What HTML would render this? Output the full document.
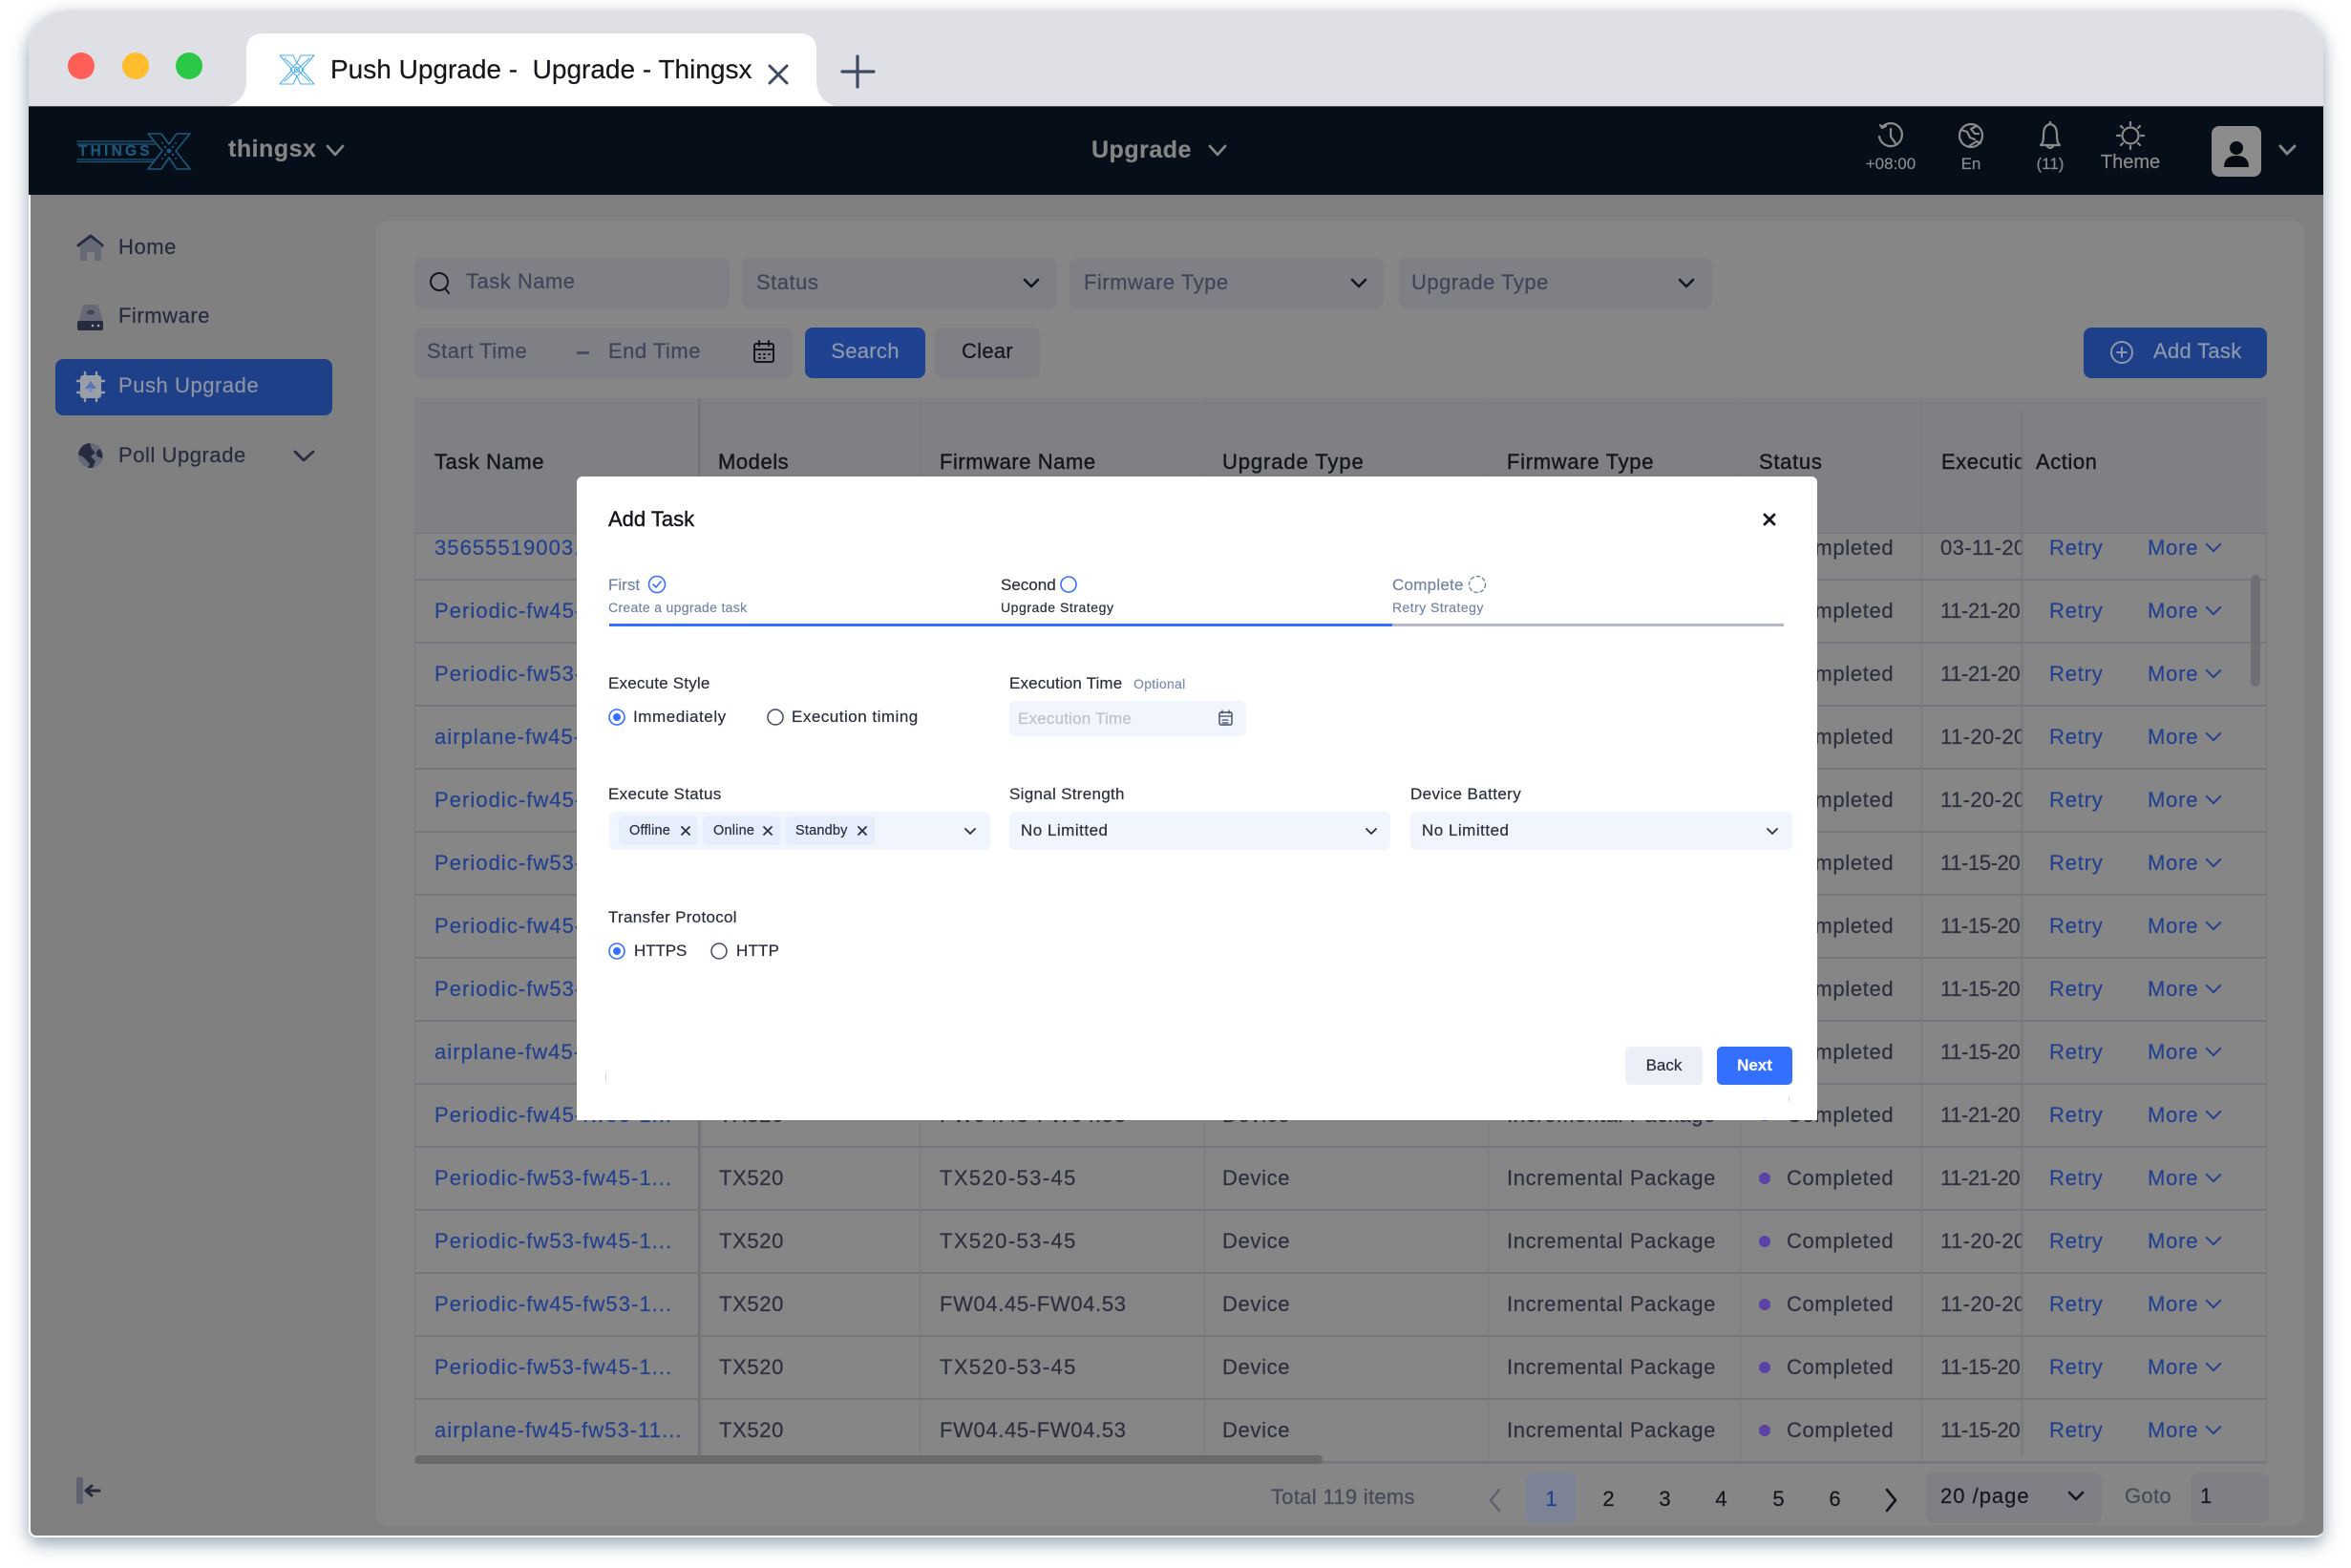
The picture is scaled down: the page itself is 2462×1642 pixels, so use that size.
<!DOCTYPE html>
<html><head><meta charset="utf-8"><title>Push Upgrade</title>
<style>
*{box-sizing:border-box}
html,body{margin:0;padding:0;width:2462px;height:1642px;background:#fff;overflow:hidden;font-family:"Liberation Sans",sans-serif;-webkit-text-stroke:.2px}
.a,.t{position:absolute}
.t{white-space:nowrap;line-height:40px;height:40px}
.box{position:absolute;background:#7e8086;border-radius:8px}
.side{font-size:22px;letter-spacing:.55px;color:#262b40}
.ph{font-size:22px;letter-spacing:.5px;color:#3f4558}
.hd{font-size:22px;color:#14161e;letter-spacing:.55px;-webkit-text-stroke:.4px #14161e}
.vl{position:absolute;top:417px;height:1116px;width:1px;background:#787a82}
.r{position:absolute;left:434px;width:1940px;height:66px;border-bottom:2px solid #74767d;font-size:22px;letter-spacing:.65px;color:#2b2f3e}
.r span{position:absolute;top:0;line-height:63px;white-space:nowrap}
.r .a1{left:21px;color:#23408f;letter-spacing:1.05px}
.r .b{left:319px}.r .c{left:550px}.r .x{letter-spacing:1.4px}.r .d{left:846px}.r .e{left:1144px}
.r .f{left:1408px;top:26px;width:12px;height:12px;border-radius:50%;background:#5a42a6}
.r .g{left:1437px}
.r .h{left:1598px;width:86px;overflow:hidden;letter-spacing:-.4px}
.r .h2{left:1598px;width:86px;overflow:hidden;letter-spacing:.4px}
.r .i{left:1712px;color:#23408f;letter-spacing:.8px}
.r .j{left:1815px;color:#23408f;letter-spacing:.8px}
.r .k{left:1878px;top:22px;width:12px;height:12px;border-right:2px solid #23408f;border-bottom:2px solid #23408f;transform:rotate(45deg)}
.m{font-size:17px;color:#2b2f3e;letter-spacing:.2px}
.mb{position:absolute;background:#f1f5fe;border-radius:6px}
.tag{position:absolute;top:855px;height:30px;background:#e7eefb;border-radius:4px}
.pg{font-size:22px;color:#14161e}
</style></head>
<body>
<div class="a" style="left:30px;top:11px;width:2403px;height:1599px;border-radius:40px 40px 10px 10px;box-shadow:0 6px 18px rgba(70,100,130,.6)"></div>

<!-- title bar -->
<div class="a" style="left:30px;top:11px;width:2403px;height:101px;background:#dee0e5;border-radius:40px 40px 0 0"></div>
<svg class="a" style="left:230px;top:30px" width="660" height="82" viewBox="230 30 660 82"><path d="M238 111 C252 108 258 96 258 84 V53 Q258 35 276 35 H837 Q855 35 855 53 V84 C855 96 861 108 875 111 Z" fill="#fff"/></svg>
<div class="a" style="left:71px;top:55px;width:28px;height:28px;border-radius:50%;background:#ff5f57"></div>
<div class="a" style="left:128px;top:55px;width:28px;height:28px;border-radius:50%;background:#ffbd2e"></div>
<div class="a" style="left:184px;top:55px;width:28px;height:28px;border-radius:50%;background:#2ac845"></div>
<div class="t" style="left:346px;top:53px;font-size:28px;color:#15171c;letter-spacing:0;white-space:pre">Push Upgrade -  Upgrade - Thingsx</div>

<!-- header -->
<div class="a" style="left:30px;top:111px;width:2403px;height:93px;background:#060e1a;border-top:1px solid #4a4e55"></div>
<div class="t" style="left:82px;top:139px;font-size:15.5px;font-weight:700;letter-spacing:3.2px;color:#1c5a7c">THINGS</div>
<div class="t" style="left:239px;top:136px;font-size:25px;font-weight:700;color:#858585;letter-spacing:.5px">thingsx</div>
<div class="t" style="left:1143px;top:137px;font-size:25px;font-weight:700;color:#858585;letter-spacing:.5px">Upgrade</div>
<div class="t" style="left:1940px;top:152px;width:80px;text-align:center;font-size:17px;color:#858a8e">+08:00</div>
<div class="t" style="left:2024px;top:152px;width:80px;text-align:center;font-size:17px;color:#858a8e">En</div>
<div class="t" style="left:2107px;top:152px;width:80px;text-align:center;font-size:17px;color:#858a8e">(11)</div>
<div class="t" style="left:2181px;top:150px;width:100px;text-align:center;font-size:20px;color:#8b8b8b">Theme</div>
<div class="a" style="left:2316px;top:132px;width:52px;height:53px;border-radius:8px;background:#8c8c8c"></div>

<!-- content -->
<div class="a" style="left:30px;top:204px;width:2403px;height:1406px;background:#808080;border-left:2px solid #fff;border-bottom:2px solid #fff;border-radius:0 0 8px 8px"></div>
<div class="a" style="left:394px;top:231px;width:2019px;height:1367px;background:#868686;border-radius:12px"></div>

<!-- sidebar -->
<div class="t side" style="left:124px;top:239px">Home</div>
<div class="t side" style="left:124px;top:311px">Firmware</div>
<div class="a" style="left:58px;top:376px;width:290px;height:59px;background:#1e4088;border-radius:8px"></div>
<div class="t side" style="left:124px;top:384px;color:#8d93a2">Push Upgrade</div>
<div class="t side" style="left:124px;top:457px">Poll Upgrade</div>

<!-- filters -->
<div class="box" style="left:434px;top:270px;width:330px;height:53px"></div>
<div class="box" style="left:777px;top:270px;width:330px;height:53px"></div>
<div class="box" style="left:1120px;top:270px;width:329px;height:53px"></div>
<div class="box" style="left:1465px;top:270px;width:328px;height:53px"></div>
<div class="box" style="left:434px;top:343px;width:396px;height:53px"></div>
<div class="a" style="left:843px;top:343px;width:126px;height:53px;background:#1f4390;border-radius:8px"></div>
<div class="box" style="left:979px;top:343px;width:110px;height:53px"></div>
<div class="a" style="left:2182px;top:343px;width:192px;height:53px;background:#1e4088;border-radius:8px"></div>
<div class="t ph" style="left:488px;top:275px">Task Name</div>
<div class="t ph" style="left:792px;top:276px">Status</div>
<div class="t ph" style="left:1135px;top:276px">Firmware Type</div>
<div class="t ph" style="left:1478px;top:276px">Upgrade Type</div>
<div class="t ph" style="left:447px;top:348px">Start Time</div>
<div class="t ph" style="left:637px;top:348px">End Time</div>
<div class="a" style="left:604px;top:368px;width:13px;height:3px;background:#484e60"></div>
<div class="t" style="left:843px;top:348px;width:126px;text-align:center;font-size:22px;color:#8d97ad;letter-spacing:.3px">Search</div>
<div class="t" style="left:979px;top:348px;width:110px;text-align:center;font-size:22px;color:#14161e;letter-spacing:.3px">Clear</div>
<div class="t" style="left:2255px;top:348px;font-size:22px;color:#8d97ad;letter-spacing:.3px">Add Task</div>

<!-- table -->
<div class="a" style="left:434px;top:417px;width:1940px;height:1116px;background:#868686;border:1px solid #787a82;border-radius:8px 8px 0 0"></div>
<div class="a" style="left:434px;top:417px;width:1940px;height:1116px;overflow:hidden">
<div class="a" style="left:0;top:0;width:1940px;height:1116px">
<div class="r" style="top:125px;left:0"><span class="a1">35655519003...</span><span class="b">TX520</span><span class="c">FW04.45-FW04.53</span><span class="d">Device</span><span class="e">Incremental Package</span><i class="f a"></i><span class="g">Completed</span><span class="h2">03-11-2022</span><span class="i">Retry</span><span class="j">More</span><b class="k a"></b></div>
<div class="r" style="top:191px;left:0"><span class="a1">Periodic-fw45-fw53-1...</span><span class="b">TX520</span><span class="c">FW04.45-FW04.53</span><span class="d">Device</span><span class="e">Incremental Package</span><i class="f a"></i><span class="g">Completed</span><span class="h">11-21-20</span><span class="i">Retry</span><span class="j">More</span><b class="k a"></b></div>
<div class="r" style="top:257px;left:0"><span class="a1">Periodic-fw53-fw45-1...</span><span class="b">TX520</span><span class="c x">TX520-53-45</span><span class="d">Device</span><span class="e">Incremental Package</span><i class="f a"></i><span class="g">Completed</span><span class="h">11-21-20</span><span class="i">Retry</span><span class="j">More</span><b class="k a"></b></div>
<div class="r" style="top:323px;left:0"><span class="a1">airplane-fw45-fw53-11...</span><span class="b">TX520</span><span class="c">FW04.45-FW04.53</span><span class="d">Device</span><span class="e">Incremental Package</span><i class="f a"></i><span class="g">Completed</span><span class="h2">11-20-2022</span><span class="i">Retry</span><span class="j">More</span><b class="k a"></b></div>
<div class="r" style="top:389px;left:0"><span class="a1">Periodic-fw45-fw53-1...</span><span class="b">TX520</span><span class="c">FW04.45-FW04.53</span><span class="d">Device</span><span class="e">Incremental Package</span><i class="f a"></i><span class="g">Completed</span><span class="h2">11-20-2022</span><span class="i">Retry</span><span class="j">More</span><b class="k a"></b></div>
<div class="r" style="top:455px;left:0"><span class="a1">Periodic-fw53-fw45-1...</span><span class="b">TX520</span><span class="c x">TX520-53-45</span><span class="d">Device</span><span class="e">Incremental Package</span><i class="f a"></i><span class="g">Completed</span><span class="h">11-15-20</span><span class="i">Retry</span><span class="j">More</span><b class="k a"></b></div>
<div class="r" style="top:521px;left:0"><span class="a1">Periodic-fw45-fw53-1...</span><span class="b">TX520</span><span class="c">FW04.45-FW04.53</span><span class="d">Device</span><span class="e">Incremental Package</span><i class="f a"></i><span class="g">Completed</span><span class="h">11-15-20</span><span class="i">Retry</span><span class="j">More</span><b class="k a"></b></div>
<div class="r" style="top:587px;left:0"><span class="a1">Periodic-fw53-fw45-1...</span><span class="b">TX520</span><span class="c x">TX520-53-45</span><span class="d">Device</span><span class="e">Incremental Package</span><i class="f a"></i><span class="g">Completed</span><span class="h">11-15-20</span><span class="i">Retry</span><span class="j">More</span><b class="k a"></b></div>
<div class="r" style="top:653px;left:0"><span class="a1">airplane-fw45-fw53-11...</span><span class="b">TX520</span><span class="c">FW04.45-FW04.53</span><span class="d">Device</span><span class="e">Incremental Package</span><i class="f a"></i><span class="g">Completed</span><span class="h">11-15-20</span><span class="i">Retry</span><span class="j">More</span><b class="k a"></b></div>
<div class="r" style="top:719px;left:0"><span class="a1">Periodic-fw45-fw53-1...</span><span class="b">TX520</span><span class="c">FW04.45-FW04.53</span><span class="d">Device</span><span class="e">Incremental Package</span><i class="f a"></i><span class="g">Completed</span><span class="h">11-21-20</span><span class="i">Retry</span><span class="j">More</span><b class="k a"></b></div>
<div class="r" style="top:785px;left:0"><span class="a1">Periodic-fw53-fw45-1...</span><span class="b">TX520</span><span class="c x">TX520-53-45</span><span class="d">Device</span><span class="e">Incremental Package</span><i class="f a"></i><span class="g">Completed</span><span class="h">11-21-20</span><span class="i">Retry</span><span class="j">More</span><b class="k a"></b></div>
<div class="r" style="top:851px;left:0"><span class="a1">Periodic-fw53-fw45-1...</span><span class="b">TX520</span><span class="c x">TX520-53-45</span><span class="d">Device</span><span class="e">Incremental Package</span><i class="f a"></i><span class="g">Completed</span><span class="h2">11-20-2022</span><span class="i">Retry</span><span class="j">More</span><b class="k a"></b></div>
<div class="r" style="top:917px;left:0"><span class="a1">Periodic-fw45-fw53-1...</span><span class="b">TX520</span><span class="c">FW04.45-FW04.53</span><span class="d">Device</span><span class="e">Incremental Package</span><i class="f a"></i><span class="g">Completed</span><span class="h2">11-20-2022</span><span class="i">Retry</span><span class="j">More</span><b class="k a"></b></div>
<div class="r" style="top:983px;left:0"><span class="a1">Periodic-fw53-fw45-1...</span><span class="b">TX520</span><span class="c x">TX520-53-45</span><span class="d">Device</span><span class="e">Incremental Package</span><i class="f a"></i><span class="g">Completed</span><span class="h">11-15-20</span><span class="i">Retry</span><span class="j">More</span><b class="k a"></b></div>
<div class="r" style="top:1049px;left:0"><span class="a1">airplane-fw45-fw53-11...</span><span class="b">TX520</span><span class="c">FW04.45-FW04.53</span><span class="d">Device</span><span class="e">Incremental Package</span><i class="f a"></i><span class="g">Completed</span><span class="h">11-15-20</span><span class="i">Retry</span><span class="j">More</span><b class="k a"></b></div>
</div>
<!-- header row -->
<div class="a" style="left:0;top:0;width:1940px;height:142px;background:#7f8084;border-bottom:1px solid #72747b"></div>
</div>
<div class="t hd" style="left:455px;top:464px">Task Name</div>
<div class="t hd" style="left:752px;top:464px">Models</div>
<div class="t hd" style="left:984px;top:464px">Firmware Name</div>
<div class="t hd" style="left:1280px;top:464px;letter-spacing:.9px">Upgrade Type</div>
<div class="t hd" style="left:1578px;top:464px;letter-spacing:.7px">Firmware Type</div>
<div class="t hd" style="left:1842px;top:464px;letter-spacing:.7px">Status</div>
<div class="t hd" style="left:2033px;top:464px;width:85px;overflow:hidden">Execution Time</div>
<div class="t hd" style="left:2132px;top:464px">Action</div>
<div class="vl" style="left:963px"></div>
<div class="vl" style="left:1261px"></div>
<div class="vl" style="left:1558px"></div>
<div class="vl" style="left:1822px"></div>
<div class="vl" style="left:2012px"></div>
<div class="a" style="left:731px;top:417px;width:5px;height:1116px;background:linear-gradient(90deg,#6d6e72,#7c7d80 60%,rgba(130,130,130,0))"></div>
<div class="a" style="left:2114px;top:430px;width:5px;height:1095px;background:linear-gradient(90deg,rgba(120,120,125,0),#77787c)"></div>
<div class="a" style="left:2357px;top:602px;width:10px;height:117px;border-radius:5px;background:#6f7075"></div>
<div class="a" style="left:435px;top:1524px;width:950px;height:9px;border-radius:4px;background:#696a6c"></div>

<!-- pagination -->
<div class="t" style="left:1331px;top:1548px;font-size:22px;letter-spacing:.3px;color:#454a59">Total 119 items</div>
<div class="a" style="left:1598px;top:1542px;width:53px;height:53px;border-radius:8px;background:#7b8394"></div>
<div class="t pg" style="left:1598px;top:1550px;width:53px;text-align:center;color:#23408f">1</div>
<div class="t pg" style="left:1658px;top:1550px;width:53px;text-align:center">2</div>
<div class="t pg" style="left:1717px;top:1550px;width:53px;text-align:center">3</div>
<div class="t pg" style="left:1776px;top:1550px;width:53px;text-align:center">4</div>
<div class="t pg" style="left:1836px;top:1550px;width:53px;text-align:center">5</div>
<div class="t pg" style="left:1895px;top:1550px;width:53px;text-align:center">6</div>
<div class="box" style="left:2017px;top:1542px;width:184px;height:53px"></div>
<div class="t pg" style="left:2032px;top:1547px;letter-spacing:1px">20 /page</div>
<div class="t" style="left:2225px;top:1547px;font-size:22px;letter-spacing:.3px;color:#454a59">Goto</div>
<div class="box" style="left:2294px;top:1542px;width:82px;height:53px"></div>
<div class="t pg" style="left:2304px;top:1547px">1</div>

<!-- modal -->
<div class="a" style="left:604px;top:499px;width:1299px;height:674px;background:#fff;border-radius:6px 6px 0 0"></div>
<div class="t" style="left:637px;top:524px;font-size:22px;color:#14161e;-webkit-text-stroke:.4px #14161e">Add Task</div>
<div class="t" style="left:637px;top:593px;font-size:17px;color:#7585a8">First</div>
<div class="t" style="left:637px;top:616px;font-size:14px;letter-spacing:.33px;color:#7585a8">Create a upgrade task</div>
<div class="t" style="left:1048px;top:593px;font-size:17px;color:#2b2f3e">Second</div>
<div class="t" style="left:1048px;top:616px;font-size:14px;letter-spacing:.55px;color:#2b2f3e">Upgrade Strategy</div>
<div class="t" style="left:1458px;top:593px;font-size:17px;letter-spacing:.25px;color:#7585a8">Complete</div>
<div class="t" style="left:1458px;top:616px;font-size:14px;letter-spacing:.45px;color:#7585a8">Retry Strategy</div>
<div class="a" style="left:638px;top:653px;width:820px;height:3px;background:#3370ff"></div>
<div class="a" style="left:1458px;top:653px;width:410px;height:3px;background:#b5b9c8"></div>

<div class="t m" style="left:637px;top:696px;letter-spacing:.2px">Execute Style</div>
<div class="t m" style="left:1057px;top:696px;letter-spacing:.15px">Execution Time</div>
<div class="t" style="left:1187px;top:696px;font-size:14px;letter-spacing:.3px;color:#7a8cb0">Optional</div>
<div class="t m" style="left:663px;top:731px;letter-spacing:.55px">Immediately</div>
<div class="t m" style="left:829px;top:731px;letter-spacing:.5px">Execution timing</div>
<div class="mb" style="left:1057px;top:734px;width:248px;height:37px"></div>
<div class="t" style="left:1066px;top:733px;font-size:17px;letter-spacing:.2px;color:#bcc2cf">Execution Time</div>

<div class="t m" style="left:637px;top:812px;letter-spacing:.3px">Execute Status</div>
<div class="t m" style="left:1057px;top:812px;letter-spacing:.3px">Signal Strength</div>
<div class="t m" style="left:1477px;top:812px;letter-spacing:.4px">Device Battery</div>
<div class="mb" style="left:638px;top:850px;width:399px;height:40px"></div>
<div class="mb" style="left:1057px;top:850px;width:399px;height:40px"></div>
<div class="mb" style="left:1477px;top:850px;width:400px;height:40px"></div>
<div class="tag" style="left:648px;width:82px"></div>
<div class="tag" style="left:736px;width:81px"></div>
<div class="tag" style="left:823px;width:93px"></div>
<div class="t" style="left:659px;top:850px;font-size:14.5px;letter-spacing:.2px;color:#2b2f3e">Offline</div>
<div class="t" style="left:747px;top:850px;font-size:14.5px;letter-spacing:.2px;color:#2b2f3e">Online</div>
<div class="t" style="left:833px;top:850px;font-size:14.5px;letter-spacing:.2px;color:#2b2f3e">Standby</div>
<div class="t" style="left:1069px;top:850px;font-size:17px;letter-spacing:.5px;color:#2b2f3e">No Limitted</div>
<div class="t" style="left:1489px;top:850px;font-size:17px;letter-spacing:.5px;color:#2b2f3e">No Limitted</div>

<div class="t m" style="left:637px;top:941px;letter-spacing:.3px">Transfer Protocol</div>
<div class="t m" style="left:664px;top:976px;letter-spacing:-.1px">HTTPS</div>
<div class="t m" style="left:771px;top:976px">HTTP</div>
<div class="a" style="left:1702px;top:1096px;width:81px;height:40px;background:#eceff8;border-radius:5px"></div>
<div class="a" style="left:1798px;top:1096px;width:79px;height:40px;background:#3370ff;border-radius:5px"></div>
<div class="t" style="left:1702px;top:1096px;width:81px;text-align:center;font-size:17px;color:#2b2f3e">Back</div>
<div class="t" style="left:1798px;top:1096px;width:79px;text-align:center;font-size:17px;font-weight:700;color:#fff">Next</div>
<div class="a" style="left:634px;top:1122px;width:1px;height:12px;background:#d8dade"></div>
<div class="a" style="left:1873px;top:1148px;width:1px;height:6px;background:#d8dade"></div>

<!-- icon overlay -->
<svg class="a" style="left:0;top:0;pointer-events:none" width="2462" height="1642" viewBox="0 0 2462 1642" fill="none" stroke-linecap="round" stroke-linejoin="round">
<!-- favicon -->
<g stroke="#4fb0ea" stroke-width="1.1">
<path d="M293 58 H307 L311 66 L315 58 H329 L316 73 L329 88 H315 L311 80 L307 88 H293 L306 73 Z"/>
<path d="M298 61 L324 85 M324 61 L298 85 M311 66 L304 73 L311 80 L318 73 Z"/>
<circle cx="311" cy="73" r="2.5"/>
</g>
<!-- tab close, plus -->
<path d="M806 69 L824 87 M824 69 L806 87" stroke="#3e4a63" stroke-width="3"/>
<path d="M898 59 V91 M882 75 H915" stroke="#3e4a63" stroke-width="3.2"/>
<!-- logo -->
<g stroke="#1c5a7c">
<path d="M155 140 H169 L177 151 L185 140 H199 L184 158 L199 177 H185 L177 165 L169 177 H155 L170 158 Z" stroke-width="1.6"/>
<path d="M81 148 H160 M81 151 H163 M81 167 H163 M81 169.500 H160" stroke-width="1.3"/>
</g>
<g fill="#1c5a7c"><circle cx="177" cy="158" r="2.5"/><circle cx="170" cy="150" r="1"/><circle cx="184" cy="150" r="1"/><circle cx="170" cy="166" r="1"/><circle cx="184" cy="166" r="1"/><circle cx="173" cy="154" r="1.2"/><circle cx="181" cy="154" r="1.2"/><circle cx="173" cy="162" r="1.2"/><circle cx="181" cy="162" r="1.2"/><circle cx="177" cy="150" r="1"/><circle cx="177" cy="166" r="1"/></g>
<!-- header chevrons -->
<g stroke-width="2.8" stroke="#858585">
<path d="M343 153 L351 162 L359 153"/><path d="M1267 153 L1275 162 L1283 153"/>
<path d="M2388 153 L2395 161 L2403 153" stroke-width="3"/>
</g>
<!-- right icons -->
<g stroke="#8b8b8b" stroke-width="2.2">
<path d="M1971 133 A12 12 0 1 1 1968 143 M1969 131 L1971 134 L1975 132"/><path d="M1980 135 V143 L1985 150"/>
<circle cx="2064" cy="142" r="12"/><path d="M2054 136 L2060 138 L2063 144 L2068 146 M2070 132 L2064 135 L2068 140 L2072 140 M2062 153 L2070 148 L2074 150"/>
<path d="M2147 130 C2141 131 2140 136 2140 142 C2140 148 2139 150 2137 152 H2157 C2155 150 2154 148 2154 142 C2154 136 2153 131 2147 130 Z M2147 130 V128 M2143 152 Q2147 158 2151 152"/>
<circle cx="2231" cy="142" r="8.5"/><path d="M2231 128 V131 M2231 153 V156 M2217 142 H2220 M2242 142 H2245 M2221 132 L2223 134 M2239 150 L2241 152 M2241 132 L2239 134 M2223 150 L2221 152"/>
</g>
<!-- avatar -->
<circle cx="2342" cy="155" r="7" fill="#050a12"/><path d="M2329 175 Q2329 163 2342 163 Q2355 163 2355 175 Z" fill="#050a12"/>
<!-- sidebar icons -->
<path d="M82 257 L95 247 L107 257" stroke="#262b40" stroke-width="3"/>
<path d="M84 257 L95 249 L106 257 V273 H99 V264 H91 V273 H84 Z" fill="#666a76"/>
<path d="M87 320 Q88 319 90 319 H100 Q102 319 103 320 L108 337 H82 Z" fill="#666a76"/>
<ellipse cx="95" cy="327" rx="4" ry="2.5" fill="#3f4352"/>
<rect x="81" y="336" width="27" height="10" rx="2" fill="#262b40"/>
<circle cx="97" cy="341" r="1.3" fill="#aaa"/><circle cx="103" cy="341" r="1.3" fill="#aaa"/>
<rect x="84" y="393" width="22" height="24" rx="3" fill="#9a9ea8"/>
<path d="M89 390 V393 M101 390 V393 M89 417 V420 M101 417 V420 M81 399 H84 M81 411 H84 M106 399 H109 M106 411 H109" stroke="#9a9ea8" stroke-width="2.4"/>
<path d="M95 399 L101 407 H89 Z" fill="#5a73b5"/><rect x="93.500" y="406" width="3" height="5" fill="#7488bd"/>
<circle cx="95" cy="477" r="13" fill="#666a76"/>
<path d="M94 464 C86 465 83 470 82 476 L88 479 L94 486 L92 490 L97 490 L100 483 L95 478 L100 474 L96 470 Z" fill="#262b40"/><path d="M104 470 Q99 474 102 478 L107 480 Q108 474 104 470 Z" fill="#262b40"/>
<path d="M309 473 L318 482 L328 473" stroke="#262b40" stroke-width="2.8"/>
<!-- collapse -->
<rect x="80" y="1547" width="7" height="28" rx="2" fill="#5f6270"/>
<path d="M104 1561 H91 M96 1556 L90 1561 L96 1566" stroke="#262b40" stroke-width="3"/>
<!-- filter icons -->
<circle cx="460" cy="295" r="9" stroke="#14161e" stroke-width="2"/><path d="M466 302 L470 307" stroke="#14161e" stroke-width="2"/>
<g stroke="#14161e" stroke-width="2.6"><path d="M1073 293 L1080 300 L1087 293"/><path d="M1416 293 L1423 300 L1430 293"/><path d="M1759 293 L1766 300 L1773 293"/></g>
<rect x="790" y="360" width="20" height="19" rx="2" stroke="#14161e" stroke-width="2"/><path d="M790 366 H810 M795 357 V362 M805 357 V362" stroke="#14161e" stroke-width="2"/><path d="M795 371 h1 M800 371 h1 M805 371 h1 M795 375 h1 M800 375 h1" stroke="#14161e" stroke-width="2"/>
<circle cx="2222" cy="369" r="11" stroke="#8d97ad" stroke-width="2"/><path d="M2222 364 V374 M2217 369 H2227" stroke="#8d97ad" stroke-width="2"/>
<!-- pagination arrows -->
<path d="M1570 1560 L1561 1571 L1570 1582" stroke="#5c6170" stroke-width="2.4"/>
<path d="M1976 1560 L1985 1571 L1976 1582" stroke="#14161e" stroke-width="2.6"/>
<path d="M2167 1563 L2174 1570 L2181 1563" stroke="#14161e" stroke-width="2.6"/>
<!-- modal icons -->
<path d="M1848 539 L1858 549 M1858 539 L1848 549" stroke="#14161e" stroke-width="2.8"/>
<circle cx="688" cy="612" r="8.500" stroke="#3370ff" stroke-width="1.6"/><path d="M684 612 L687 615 L692 609" stroke="#3370ff" stroke-width="1.6"/>
<circle cx="1119" cy="612" r="8" stroke="#3370ff" stroke-width="1.6"/>
<circle cx="1547" cy="612" r="8.500" stroke="#7585a8" stroke-width="1.4" stroke-dasharray="3.500 3"/>
<circle cx="646" cy="751" r="8" stroke="#3370ff" stroke-width="1.6"/><circle cx="646" cy="751" r="4" fill="#3370ff"/>
<circle cx="812" cy="751" r="8" stroke="#3e4a63" stroke-width="1.5"/>
<rect x="1277" y="746" width="13" height="13" rx="1.500" stroke="#3e4a63" stroke-width="1.4"/><path d="M1277 750 H1290 M1280 744 V747 M1287 744 V747 M1280 754 h6 M1280 757 h6" stroke="#3e4a63" stroke-width="1.2"/>
<g stroke="#2b2f3e" stroke-width="1.8">
<path d="M714 866 L722 874 M722 866 L714 874"/><path d="M800 866 L808 874 M808 866 L800 874"/><path d="M899 866 L907 874 M907 866 L899 874"/>
</g>
<g stroke="#2b2f3e" stroke-width="1.8"><path d="M1011 868 L1016 873 L1021 868"/><path d="M1431 868 L1436 873 L1441 868"/><path d="M1851 868 L1856 873 L1861 868"/></g>
<circle cx="646" cy="996" r="8" stroke="#3370ff" stroke-width="1.6"/><circle cx="646" cy="996" r="4" fill="#3370ff"/>
<circle cx="753" cy="996" r="8" stroke="#3e4a63" stroke-width="1.5"/>
</svg>
</body></html>
